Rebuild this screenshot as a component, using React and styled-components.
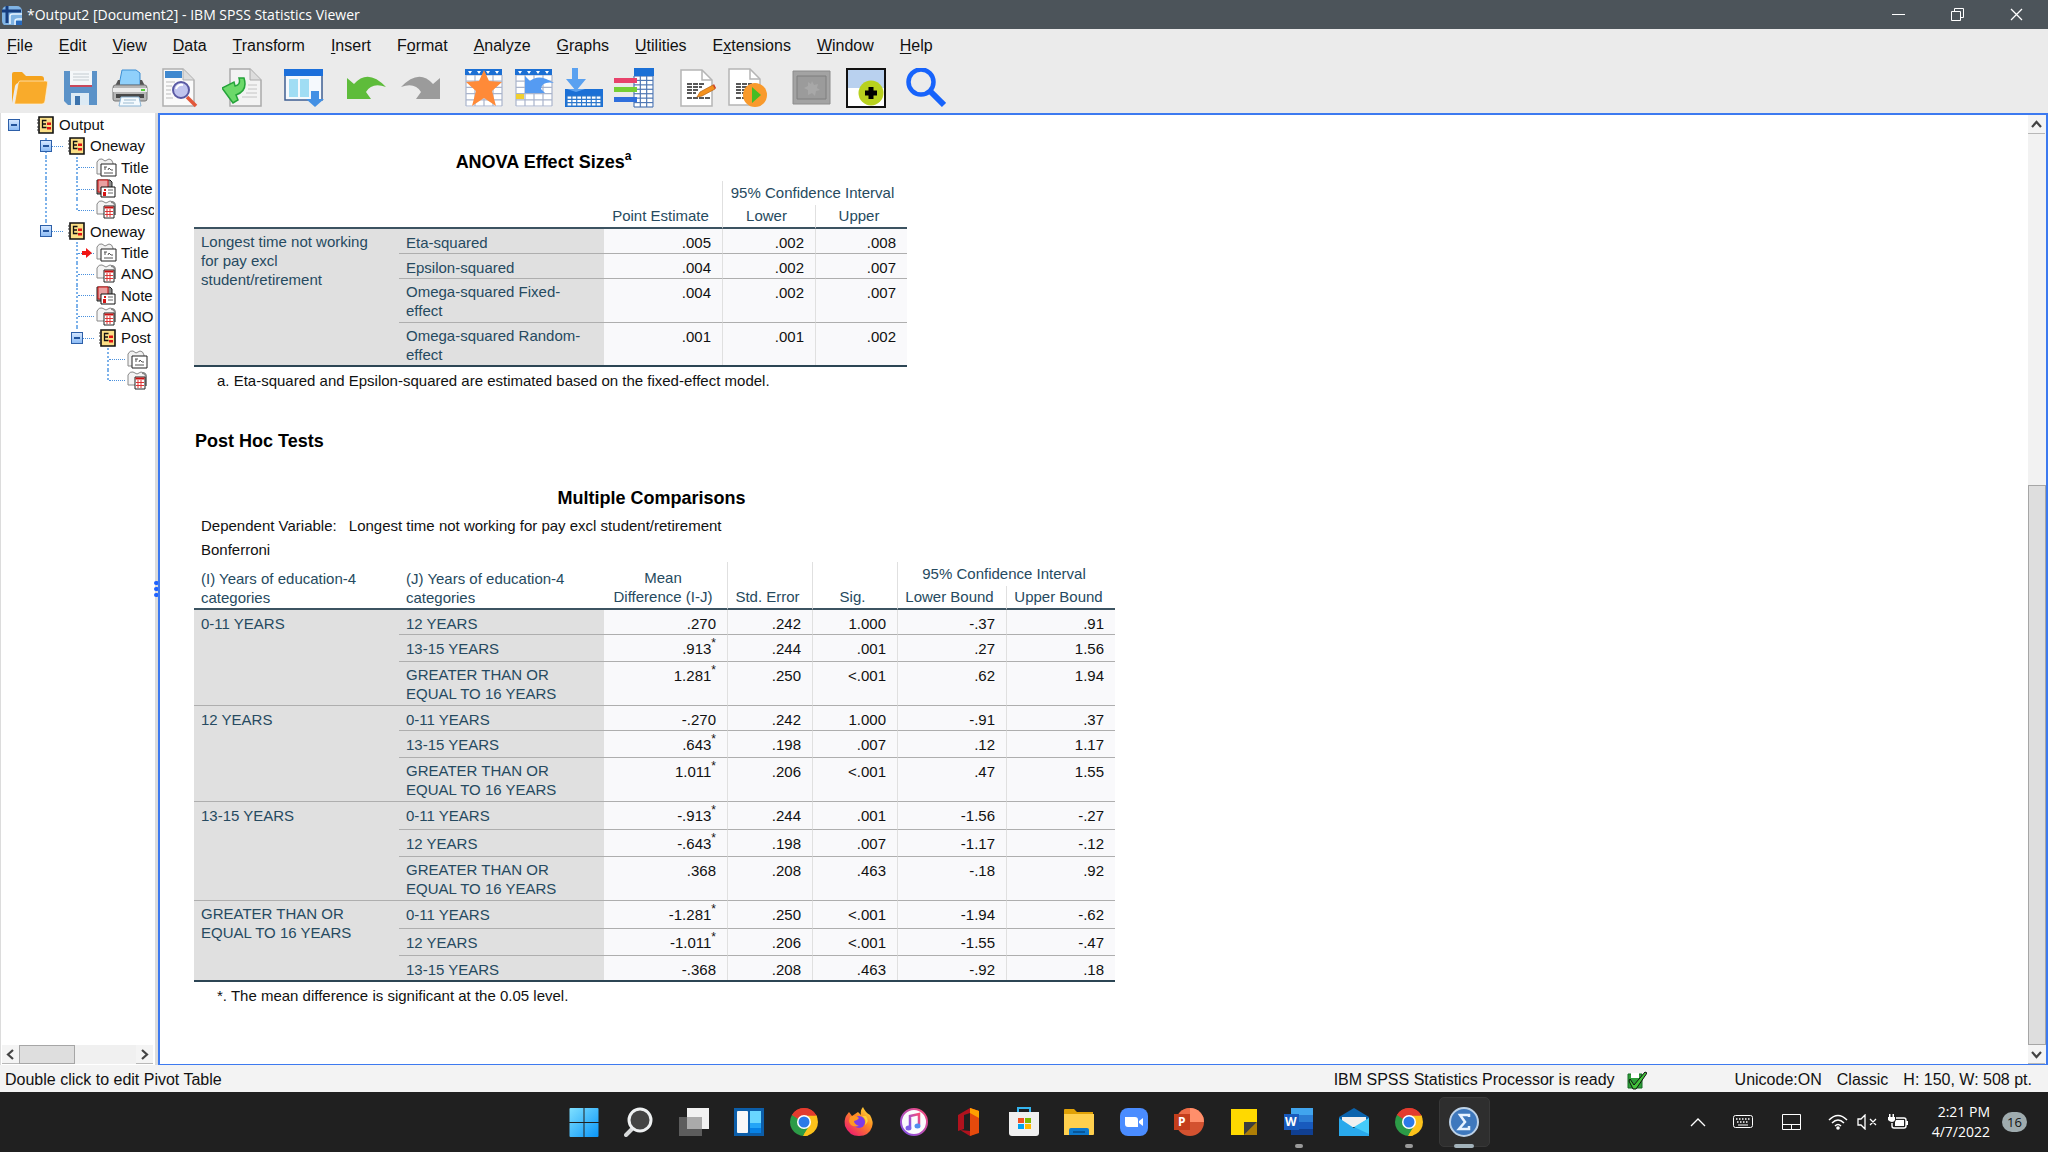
import React from "react";
import styled, { createGlobalStyle, css } from "styled-components";

const Global = createGlobalStyle`
  * { box-sizing: border-box; }
  body { margin: 0; font-family: "Liberation Sans", Arial, sans-serif; font-size: 16px; color: #111; }
  button { border: 0; padding: 0; margin: 0; background: none; font: inherit; color: inherit; }
`;

const Shell = styled.div`
  display: flex;
  flex-direction: column;
  height: 100vh;
  min-width: 1200px;
  overflow: hidden;
  background: #ebebeb;
`;

/* ---------- title bar ---------- */
const TitleBar = styled.header`
  display: flex;
  align-items: center;
  height: 29px;
  flex: none;
  padding: 0 2px;
  gap: 5px;
  background: #4c545a;
  color: #fff;
`;
const TitleText = styled.h1`
  margin: 0;
  flex: 1;
  font: 400 14px/20px "Open Sans", "Noto Sans", sans-serif;
`;
const WindowButtons = styled.div`
  display: flex;
`;
const WindowButton = styled.button`
  width: 59px;
  height: 29px;
  display: grid;
  place-items: center;
`;

/* ---------- menu and toolbar ---------- */
const MenuBar = styled.nav`
  display: flex;
  flex: none;
  gap: 26px;
  height: 33px;
  padding: 1px 7px 0;
  align-items: center;
`;
const MenuButton = styled.button`
  line-height: 20px;
  u { text-underline-offset: 2px; }
`;
const Toolbar = styled.div`
  display: flex;
  flex: none;
  height: 51px;
  padding: 6px 10px 5px;
`;
const ToolGroup = styled.div`
  display: flex;
  gap: ${(p) => p.$gap}px;
  margin-right: ${(p) => p.$after}px;
`;
const ToolButton = styled.button`
  width: 40px;
  height: 40px;
  svg { display: block; }
`;

/* ---------- work area ---------- */
const Work = styled.div`
  display: flex;
  flex: 1;
  min-height: 0;
`;
const Outline = styled.aside`
  width: 155px;
  flex: none;
  display: flex;
  flex-direction: column;
  background: #fff;
  border-left: 1px solid #dcdcdc;
  padding-right: 1px;
`;
const Tree = styled.ul`
  list-style: none;
  margin: 0;
  padding: 1px 0 0;
  height: 278px;
  display: flex;
  flex-direction: column;
  overflow: hidden;
  font-size: 15px;
`;
const TreeRow = styled.li`
  flex: 1;
  display: flex;
  align-items: center;
  white-space: nowrap;
`;
const Guide = styled.span`
  position: relative;
  flex: none;
  align-self: stretch;
  display: grid;
  place-items: center;
  width: ${(p) => (p.$first ? 29 : 31)}px;
  padding-right: ${(p) => (p.$first ? 3 : 0)}px;
  &::before {
    content: "";
    position: absolute;
    left: 15px;
    top: ${(p) => (p.$start ? "3px" : "0")};
    bottom: ${(p) => (p.$v === "half" ? "50%" : "0")};
    border-left: ${(p) => (p.$v ? "2px dotted #7db2ea" : "0")};
  }
  &::after {
    content: "";
    position: absolute;
    left: 17px;
    right: -2px;
    top: 50%;
    border-top: ${(p) => (p.$h ? "1px dotted #4a90dd" : "0")};
  }
`;
const Expander = styled.button`
  position: relative;
  z-index: 1;
  width: 12px;
  height: 12px;
  background: linear-gradient(#d3e6ff, #8dbcf5);
  border: 1px solid #2d5fa8;
  display: grid;
  place-items: center;
  &::after { content: ""; width: 6px; height: 2px; background: #23549c; }
`;
const Current = styled.svg`
  position: absolute;
  z-index: 1;
  right: 0;
  top: 6px;
`;
const NodeIcon = styled.span`
  flex: none;
  width: 29px;
  padding-left: ${(p) => (p.$book ? 6 : 4)}px;
  svg { display: block; }
`;
const HScroll = styled.div`
  margin-top: auto;
  margin-left: 1px;
  margin-right: 1px;
  height: 19px;
  display: flex;
  background: #f0f0f0;
  margin-bottom: 1px;
`;
const ScrollButton = styled.button`
  width: 17px;
  height: 19px;
  flex: none;
  display: grid;
  place-items: center;
  background: #f4f4f4;
  border-bottom: 1px solid #b8b8b8;
`;
const HThumb = styled.div`
  width: 56px;
  background: #dedede;
  border: 1px solid #a6a6a6;
  margin-right: auto;
`;
const Splitter = styled.div`
  width: 3px;
  flex: none;
  background: #dcdcdc;
  display: flex;
  flex-direction: column;
  align-items: center;
  justify-content: center;
  gap: 2px;
`;
const Grip = styled.i`
  width: 5px;
  height: 4px;
  flex: none;
  border-radius: 2px;
  background: #1f62ff;
`;
const Viewer = styled.main`
  flex: 1;
  min-width: 0;
  display: flex;
  background: #fff;
  border: 2px solid #3d7af0;
  border-bottom-width: 1px;
`;
const Document = styled.article`
  flex: 1;
  min-width: 0;
  overflow: hidden;
  padding: 35px 34px 0;
`;
const VScroll = styled.div`
  width: 18px;
  flex: none;
  display: flex;
  flex-direction: column;
  background: #f2f2f2;
`;
const VThumb = styled.div`
  margin-top: auto;
  height: 59%;
  background: #dedede;
  border: 1px solid #a6a6a6;
`;

/* ---------- pivot tables ---------- */
const Heading = styled.h2`
  margin: 0;
  padding: 37px 0 0 1px;
  font: 700 18px/24px "Liberation Sans", Arial, sans-serif;
  color: #000;
`;
const Caption = styled.caption`
  font: 700 18px/24px "Liberation Sans", Arial, sans-serif;
  color: #000;
  padding-bottom: ${(p) => p.$after}px;
  padding-right: ${(p) => p.$shift}px;
  sup { font-size: 12px; line-height: 0; vertical-align: 8px; }
`;
const Layer = styled.span`
  display: block;
  text-align: left;
  padding-left: 7px;
  font: 400 15px/24px "Liberation Sans", Arial, sans-serif;
  color: #111;
  &:first-of-type { margin-top: 4px; }
  b { font-weight: 400; margin-left: 8px; }
`;
const Pivot = styled.table`
  width: ${(p) => p.$width}px;
  margin-top: ${(p) => p.$before || 0}px;
  table-layout: fixed;
  border-collapse: separate;
  border-spacing: 0;
  font-size: 15px;
  line-height: 19px;
  border-bottom: 2px solid #2c4554;
`;
const Head = styled.th`
  padding: ${(p) => (p.$text ? "0 7px 1px" : p.$span ? "0 8px 3px 3px" : "0 8px 2px 3px")};
  font-weight: 400;
  color: #264a60;
  text-align: ${(p) => (p.$text ? "left" : "center")};
  vertical-align: bottom;
  border-left: ${(p) => (p.$rule ? "1px solid #e0e0e0" : "0")};
  border-bottom: ${(p) => (p.$span ? "0" : "2px solid #3c5361")};
  height: 24px;
  white-space: ${(p) => (p.$text ? "normal" : "nowrap")};
`;
const cell = css`
  vertical-align: top;
  font-weight: 400;
  border-top: ${(p) => (p.$top ? "0" : "1px solid #aeaeae")};
`;
const Label = styled.th`
  ${cell}
  padding: ${(p) => (p.$tall ? "3px" : "4px")} 20px 0 7px;
  text-align: left;
  color: #264a60;
  background: #e0e0e0;
`;
const Value = styled.td`
  ${cell}
  padding: 4px 11px 0 0;
  text-align: right;
  background: #f9f9fb;
  border-left: ${(p) => (p.$rule ? "1px solid #e0e0e0" : "0")};
  sup { font-size: 12px; line-height: 0; vertical-align: 7px; }
`;
const BodyRow = styled.tr`
  height: ${(p) => p.$h}px;
`;
const Footnote = styled.p`
  margin: 0;
  padding: 3px 0 0 23px;
  font-size: 15px;
  line-height: 22px;
`;

/* ---------- status bar ---------- */
const StatusBar = styled.footer`
  height: 27px;
  flex: none;
  display: flex;
  align-items: center;
  padding: 2px 16px 0 5px;
  background: #f3f3f3;
  line-height: 20px;
`;
const Processor = styled.span`
  display: flex;
  gap: 12px;
  margin-left: auto;
  margin-right: 88px;
`;
const StatusItem = styled.span`
  & + & { margin-left: 15px; }
`;

/* ---------- taskbar ---------- */
const Taskbar = styled.div`
  height: 60px;
  flex: none;
  display: grid;
  grid-template-columns: 1fr auto 1fr;
  align-items: center;
  background: #202020;
  color: #fff;
`;
const Apps = styled.div`
  grid-column: 2;
  display: flex;
`;
const AppButton = styled.button`
  position: relative;
  width: 55px;
  height: 60px;
  display: grid;
  place-items: center;
  svg { position: relative; }
  &::before {
    content: "";
    position: absolute;
    inset: 5px 2px;
    border-radius: 5px;
    background: ${(p) => (p.$state === "active" ? "#2e2e2e" : "none")};
    border: ${(p) => (p.$state === "active" ? "1px solid #383838" : "0")};
  }
  &::after {
    content: "";
    position: absolute;
    bottom: 4px;
    height: ${(p) => (p.$state ? 4 : 0)}px;
    width: ${(p) => (p.$state === "active" ? 20 : 8)}px;
    border-radius: 2px;
    background: ${(p) => (p.$state === "active" ? "#a3b3bb" : "#9a9a9a")};
  }
`;
const Tray = styled.div`
  display: flex;
  align-items: center;
  justify-content: flex-end;
  padding-right: 21px;
`;
const TrayButton = styled.button`
  width: 24px;
  height: 40px;
  display: grid;
  place-items: center;
  margin-right: ${(p) => p.$after}px;
`;
const Clock = styled.time`
  font: 400 14px/20px "Open Sans", "Noto Sans", sans-serif;
  text-align: right;
  margin-right: 12px;
  span { display: block; }
`;
const Badge = styled.span`
  width: 25px;
  height: 20px;
  display: grid;
  place-items: center;
  border-radius: 10px;
  background: #9fabae;
  color: #111;
  font: 400 13px/20px "Open Sans", sans-serif;
`;

/* ---------- drawings ---------- */
const Svg = ({ s = 40, w, h, vb, children }) => (
  <svg width={w || s} height={h || s} viewBox={vb || `0 0 ${w || s} ${h || s}`} fill="none" aria-hidden="true">
    {children}
  </svg>
);

const gridLines = (x, y, w, h, nx, ny, color, sw = 1.2) => (
  <g stroke={color} strokeWidth={sw}>
    {Array.from({ length: nx + 1 }, (_, i) => <path key={"v" + i} d={`M${x + (w * i) / nx} ${y}v${h}`} />)}
    {Array.from({ length: ny + 1 }, (_, i) => <path key={"h" + i} d={`M${x} ${y + (h * i) / ny}h${w}`} />)}
  </g>
);
const DataGrid = () => (
  <>
    <path d="M2 1h36v38h-36z" fill="#fff" />
    {gridLines(2, 7, 36, 31, 4, 5, "#a9b4cb")}
    <path d="M1 1h37v6h-37z" fill="#1b6fd4" />
    <path d="M4 3h4l-2 3zM13 3h4l-2 3zM22 3h4l-2 3zM31 3h4l-2 3z" fill="#fff" />
  </>
);

const tools = {
  Open: (
    <Svg>
      <path d="M2 35V6q0-2 2-2h8l4 4h15q3 0 3 3v4H9q-3 0-4 3z" fill="#f5a31d" />
      <path d="M10 13h26q2 0 1.600 2L35 33q-.5 3-3 3H4.500L8 16q.5-3 2-3z" fill="#f9ab2b" stroke="#fff1d6" strokeWidth=".7" />
    </Svg>
  ),
  Save: (
    <Svg>
      <path d="M4 3h33v34H8l-4-4z" fill="#5b92c8" />
      <path d="M10 3h22v16H10z" fill="#f4f7f9" /><path d="M10 17h22v2H10z" fill="#c8475b" />
      <path d="M13 6h16M13 9h16M13 12h16" stroke="#c3cbd0" />
      <path d="M11 25h18v12H11z" fill="#dceaf4" /><path d="M15 28h5v9h-5z" fill="#3c73ad" />
    </Svg>
  ),
  Print: (
    <Svg>
      <path d="M12 2h14l4 3v12H9z" fill="#8fd0fb" stroke="#3d8fd4" />
      <path d="M8 12h2v6h20v-6h2l3 6H5z" fill="#555" />
      <path d="M5 17h30q2 0 2 3v11q0 2-2 2H5q-2 0-2-2V20q0-3 2-3z" fill="#b6b6b6" stroke="#777" />
      <path d="M3 20h34v4H3z" fill="#ececec" /><path d="M6 26h28v4H6z" fill="#484848" />
      <path d="M31 21h4v2h-4z" fill="#54cf3a" />
      <path d="M11 29h18l2 9H9z" fill="#f4fafe" stroke="#8bb4d4" /><path d="M14 32h12M13 35h11" stroke="#9bbad0" />
    </Svg>
  ),
  Preview: (
    <Svg>
      <path d="M3 1h20l11 11v26H3z" fill="#fafafa" stroke="#b0b0b0" strokeWidth="1.500" /><path d="M23 1v11h11" fill="#ddd" stroke="#b0b0b0" />
      <path d="M5 3h17v7H5z" fill="#3f88cf" />
      <path d="M6 14h9M6 18h6M6 22h5M6 26h5M6 30h7" stroke="#bbb" />
      <path d="M27 29l9 9" stroke="#e2573a" strokeWidth="3.500" />
      <circle cx="21" cy="22" r="8" fill="#c0c4ee" stroke="#5959a3" strokeWidth="2" />
      <path d="M16 21q2-5 7-4" stroke="#fff" strokeWidth="2" />
    </Svg>
  ),
  Export: (
    <Svg>
      <path d="M8 1h20l11 11v26H8z" fill="#f3f3f3" stroke="#aaa" strokeWidth="1.500" /><path d="M28 1v11h11" fill="#ddd" stroke="#aaa" />
      <path d="M26 17h9M26 21h9M24 25h11M20 29h15" stroke="#c4c4c4" />
      <path d="M0 20l12-6 1 4q6-1 4-8l5 0q4 13-8 17l2 5-5 3z" fill="#6cd96a" stroke="#25a33a" strokeWidth="1.500" />
    </Svg>
  ),
  Recall: (
    <Svg>
      <path d="M1 2h37v30H1z" fill="#f5f9fd" stroke="#3f5f92" strokeWidth="1.500" /><path d="M0 1h39v7H0z" fill="#1b6fdb" />
      <path d="M5 11h9v18H5zM16 11h9v18h-9z" fill="#a0ddf4" />
      <path d="M27 23h8v8h5l-9 8-9-8h5z" fill="#4390e4" />
    </Svg>
  ),
  Undo: <Svg><path d="M1 10l7 6Q22 0 40 19q-14-5-20 5l5 7H1z" fill="#5ebc3b" /></Svg>,
  Redo: <Svg><path d="M40 10l-7 6Q19 0 1 19q14-5 20 5l-5 7h24z" fill="#9b9b9b" /></Svg>,
  "Go to data": <Svg><DataGrid /><path d="M20 2l5 11 13 1-10 9 4 15-12-8-12 8 4-15-10-9 13-1z" fill="#ff8a38" /></Svg>,
  "Go to case": (
    <Svg><DataGrid /><path d="M2 26h8v5H2z" fill="#f0cf2f" /><path d="M11 8l5 5q9-8 24 2-12-2-13 6l4 4H11z" fill="#559bf2" /></Svg>
  ),
  "Select cases": (
    <Svg>
      <path d="M8 0h6v11h8l-10 12L2 11h6z" fill="#5aa1f0" />
      <path d="M1 21h38v18H1z" fill="#1b70d6" />
      <path d="M3 28h34v10H3z" fill="#fff" />{gridLines(3, 28, 34, 10, 7, 3, "#2d78cc")}
      <path d="M3 21h18l-9 3z" fill="#5aa1f0" />
    </Svg>
  ),
  Variables: (
    <Svg>
      <path d="M20 0h20v39H20z" fill="#fff" />{gridLines(20, 8, 19, 31, 3, 7, "#5078b4")}
      <path d="M20 0h20v8H20z" fill="#1b70d6" />
      <path d="M0 10h23v5H0z" fill="#e8426b" /><path d="M0 19h23v5H0z" fill="#75cf35" /><path d="M0 29h23v5H0z" fill="#2f6fdc" />
    </Svg>
  ),
  "Edit script": (
    <Svg>
      <path d="M3 2h21l10 10v26H3z" fill="#fff" stroke="#b5b5b5" strokeWidth="1.500" /><path d="M24 2v10h10" stroke="#b5b5b5" strokeWidth="1.500" />
      <path d="M9 16h17M9 19h15M9 22h11M9 25h9M9 30h24" stroke="#222" strokeWidth="1.600" strokeDasharray="5 1" />
      <path d="M19 29l3-5 13-7 2 4-13 7z" fill="#f5921e" stroke="#b8620c" strokeWidth=".7" /><path d="M35 17l2 4 1-1-2-4z" fill="#ce3b20" />
    </Svg>
  ),
  "Run script": (
    <Svg>
      <path d="M1 1h21l10 10v26H1z" fill="#fff" stroke="#b5b5b5" strokeWidth="1.500" /><path d="M22 1v10h10" stroke="#b5b5b5" strokeWidth="1.500" />
      <path d="M8 16h16M8 19h12M8 22h10M8 25h9M8 30h9" stroke="#222" strokeWidth="1.600" strokeDasharray="5 1" />
      <circle cx="27" cy="27" r="12" fill="#f99a2c" /><path d="M24 19l9 8-9 8z" fill="#45bd24" />
    </Svg>
  ),
  Designate: (
    <Svg>
      <path d="M1 3h37v33H1z" fill="#a3a3a3" stroke="#8c8c8c" /><path d="M5 8h29v23H5z" fill="#9b9b9b" stroke="#7f7f7f" />
      <path d="M20 13l2 4 4-1-1 4 3 2-4 1-1 5-3-3-4 2v-5l-4-2 4-2v-4l3 2z" fill="#a8a8a8" />
    </Svg>
  ),
  "Insert object": (
    <Svg>
      <path d="M1 1h38v38H1z" fill="#fff" stroke="#111" strokeWidth="2" /><path d="M2 2h36v18H2z" fill="#b9d1ef" />
      <circle cx="25" cy="25" r="12.500" fill="#b8d11e" /><path d="M25 19v12M19 25h12" stroke="#000" strokeWidth="5" />
    </Svg>
  ),
  Search: <Svg><circle cx="15" cy="14" r="12.500" stroke="#1763fb" strokeWidth="4.500" /><path d="M24 23l14 14" stroke="#1763fb" strokeWidth="6" /></Svg>,
};

const nodeIcons = {
  book: (
    <Svg s={18}>
      <path d="M3 1h14v16H3z" fill="#fbdf86" stroke="#111" strokeWidth="1.600" /><path d="M1 4h3M1 7h3M1 11h3M1 14h3" stroke="#333" strokeWidth="1.200" />
      <path d="M10.500 4.500H6.500v7h4M7 8h3" stroke="#111" strokeWidth="1.300" /><path d="M11 6.500h4v2.500h-4zM11 11h4v2.500h-4z" fill="#e01212" />
    </Svg>
  ),
  title: (
    <Svg w={21} h={19}>
      <path d="M1 16V4q2-4 5-3l3 2 4-2q3 0 4 4v11z" fill="#f2f2f2" stroke="#888" /><path d="M5 6h15v12H5z" fill="#fff" stroke="#222" />
      <path d="M8 9h3M9 9v3M12 12l1-2 2 2h2M8 15h9" stroke="#555" />
    </Svg>
  ),
  notes: (
    <Svg w={21} h={19}>
      <path d="M1 15V1h13l2 2v12z" fill="#8c8c8c" stroke="#222" /><path d="M2 1h10v12H2z" fill="#e8a0a0" stroke="#c11" />
      <path d="M5 8h14v10H5z" fill="#fff" stroke="#111" /><path d="M8 10h2v2H8zM7 13h3v4H7z" fill="#d41414" /><path d="M12 11h5M12 14h5" stroke="#666" />
    </Svg>
  ),
  table: (
    <Svg w={21} h={19}>
      <path d="M1 14V4q2-4 5-3l4 2 4-2q4 0 5 4v9z" fill="#f4f4f4" stroke="#888" /><path d="M15 2q4 0 4 4v9" stroke="#888" strokeWidth="2" />
      <path d="M8 6h10v12H8z" fill="#fff" stroke="#222" /><path d="M8.500 6.500h9v2h-9z" fill="#c11" />
      <path d="M11 9v8M14 9v8M9 11.500h8M9 14.500h8" stroke="#d33" />
    </Svg>
  ),
};

const chrome = (
  <Svg s={28}>
    <path d="M14 14L1.900 7A14 14 0 0 1 26.100 7z" fill="#e33b2e" /><path d="M14 14L26.100 7A14 14 0 0 1 14 28z" fill="#fcc21b" />
    <path d="M14 14L14 28A14 14 0 0 1 1.900 7z" fill="#2c9b47" />
    <path d="M14 7.500h12.400L27 9l-7.600 8.500z" fill="#fcc21b" /><path d="M8.400 17.300L1.900 7 14 7.500z" fill="#2c9b47" />
    <path d="M2 7A14 14 0 0 1 26.400 7.500H14L8 11z" fill="#e33b2e" /><path d="M19.600 17.300L13 28l-5-8z" fill="#2c9b47" /><path d="M20 17l-7 11q3 .3 5-.5l7-9z" fill="#fcc21b" />
    <circle cx="14" cy="14" r="7" fill="#fff" /><circle cx="14" cy="14" r="5.500" fill="#2c7ae8" />
  </Svg>
);

const apps = [
  ["Start", <Svg s={30}><defs><linearGradient id="win" x1="0" y1="0" x2="1" y2="1"><stop stopColor="#7fe0ff" /><stop offset="1" stopColor="#0a95f8" /></linearGradient></defs>
    <path d="M.5 2q0-1 1-1h13v14H.5zM15.500 1h13q1 0 1 1v13h-14zM.5 16h14v14h-13q-1 0-1-1zM15.500 16h14v13q0 1-1 1h-13z" fill="url(#win)" /></Svg>],
  ["Search", <Svg s={30}><path d="M9 21l-7 7" stroke="#d7d9da" strokeWidth="4" strokeLinecap="round" /><circle cx="16" cy="13" r="11" fill="#444" stroke="#eef0f1" strokeWidth="3" /></Svg>],
  ["Task view", <Svg s={30}><path d="M0 10h23v19H0z" fill="#5c5c5c" /><path d="M8 1h22v21H8z" fill="#f1f1f1" /><path d="M8 10h15v12H8z" fill="#aaa" /></Svg>],
  ["Widgets", <Svg s={30}><path d="M0 1h30v28H0z" fill="#0c5ea9" /><rect x="3" y="4" width="11" height="22" rx="1" fill="#f8f8f8" /><path d="M16 4h11v12H16z" fill="#69d6ff" /><path d="M16 16h11v5H16z" fill="#24a5f7" /><path d="M16 21h11v5H16z" fill="#0782e6" /></Svg>],
  ["Chrome", chrome],
  ["Firefox", <Svg s={30}><defs><linearGradient id="fx" x1="1" y1="0" x2=".2" y2="1"><stop stopColor="#ffef45" /><stop offset=".45" stopColor="#ff8b20" /><stop offset="1" stopColor="#ec1672" /></linearGradient></defs>
    <path d="M2 9l3-4 3 4 6-4 3 3q-1-5 2-8 2 5 7 8 4 7 2 12-3 9-13 9T1 19Q0 13 2 9z" fill="url(#fx)" /><circle cx="15" cy="15" r="6" fill="#7d3be8" /><path d="M6 10q5-3 9 1-2 3-5 3 0 3 5 5-9 2-10-5z" fill="#ff9823" /><path d="M18 9q5 3 3 9 5-4 1-9z" fill="#ffd13a" /></Svg>],
  ["iTunes", <Svg s={30}><defs><linearGradient id="it" x1="1" y1="0" x2="0" y2="1"><stop stopColor="#fa4a75" /><stop offset="1" stopColor="#7f52ee" /></linearGradient></defs><circle cx="15" cy="15" r="13" fill="#fbfbfd" stroke="url(#it)" strokeWidth="2" />
    <path d="M11 20V9l9-2v11" stroke="url(#it)" strokeWidth="2.500" /><ellipse cx="9.500" cy="21" rx="3" ry="2.500" fill="#7d62e8" /><ellipse cx="18.500" cy="19" rx="3" ry="2.500" fill="#4e8df0" /></Svg>],
  ["Office", <Svg s={30}><path d="M16 1l9 3v21l-9 4-10-6 10 1V6l-6 2v14l-6 2V8z" fill="#b0121d" /><path d="M16 1l9 3v22l-9 3z" fill="#e54a0c" /><path d="M16 1l9 3v7l-9-5z" fill="#ffa000" /></Svg>],
  ["Store", <Svg s={30}><path d="M9 6V1h12v5" stroke="#35b5f0" strokeWidth="2" /><path d="M0 5h30v21q0 3-3 3H3q-3 0-3-3z" fill="#f0f0f0" /><path d="M9 11h6v5H9z" fill="#f25022" /><path d="M16 11h6v5h-6z" fill="#7fba00" /><path d="M9 17h6v5H9z" fill="#00a4ef" /><path d="M16 17h6v5h-6z" fill="#ffb900" /></Svg>],
  ["File Explorer", <Svg s={30}><path d="M0 3q0-1 1-1h9l3 3h16v4H0z" fill="#e0a106" /><path d="M0 7h30v20q0 1-1 1H0z" fill="#ffd04e" /><path d="M5 28v-5q0-2 2-2h16q2 0 2 2v5z" fill="#0e79cd" /><path d="M9 25h12" stroke="#064a86" strokeWidth="1.500" /></Svg>],
  ["Zoom", <Svg s={30}><rect x="1" y="1" width="28" height="28" rx="8" fill="#4a8cff" /><path d="M6 10h10q3 0 3 3v7H9q-3 0-3-3zM20 14l4-3v8l-4-3z" fill="#fff" /></Svg>],
  ["PowerPoint", <Svg s={30}><circle cx="16" cy="15" r="14" fill="#d35230" /><path d="M16 1a14 14 0 0 1 14 14H16z" fill="#ff8f6b" /><path d="M16 1A14 14 0 0 0 2 15h14z" fill="#ed6c47" /><path d="M0 7h16v16H0z" fill="#c43e1c" /><text x="4" y="19" fill="#fff" fontFamily="Open Sans" fontWeight="700" fontSize="12">P</text></Svg>],
  ["Sticky Notes", <Svg s={30}><path d="M2 2h26v13L15 28H2z" fill="#ffd900" /><path d="M15 15h13L15 28z" fill="#3d3d3d" /><path d="M28 15v13H15z" fill="#ae7e06" /></Svg>],
  ["Word", <Svg s={30}><path d="M7 1h22v7H7z" fill="#41a5ee" /><path d="M7 8h22v7H7z" fill="#2b7cd3" /><path d="M7 15h22v7H7z" fill="#185abd" /><path d="M7 22h22v6H7z" fill="#103f91" /><path d="M0 7h15v16H0z" fill="#185abd" /><text x="1" y="19" fill="#fff" fontFamily="Open Sans" fontWeight="700" fontSize="12">W</text></Svg>, "open"],
  ["Mail", <Svg s={30}><path d="M0 10L15 1l15 9v3H0z" fill="#0a63ad" /><path d="M3 10h24v10H3z" fill="#f0f0f0" /><path d="M0 11l15 10L30 11v18H0z" fill="#29a9ec" /><path d="M15 20l15-9v16z" fill="#45cbfa" /></Svg>],
  ["Chrome", chrome, "open"],
  ["SPSS Statistics", <Svg s={30}><circle cx="15" cy="15" r="14" fill="#3e78bd" stroke="#bdd2e8" strokeWidth="2" /><path d="M20 10V8h-9l5 7-6 7h10v-3" stroke="#e8f3ff" strokeWidth="2.500" /></Svg>, "active"],
];

/* ---------- data ---------- */
const menus = [["", "F", "ile"], ["", "E", "dit"], ["", "V", "iew"], ["", "D", "ata"], ["", "T", "ransform"], ["", "I", "nsert"], ["F", "o", "rmat"], ["", "A", "nalyze"], ["", "G", "raphs"], ["", "U", "tilities"], ["E", "x", "tensions"], ["", "W", "indow"], ["", "H", "elp"]];

// Names, the gap inside the group, and the space after it.
const toolGroups = [
  [["Open", "Save", "Print", "Preview"], 10, 22],
  [["Export"], 10, 22],
  [["Recall"], 10, 22],
  [["Undo", "Redo"], 14, 24],
  [["Go to data", "Go to case", "Select cases", "Variables"], 10, 24],
  [["Edit script", "Run script"], 10, 24],
  [["Designate", "Insert object"], 14, 20],
  [["Search"], 10, 0],
];

// Each guide is [vertical, horizontal, has expander, starts a branch].
const none = [], full = ["full"], tee = ["full", true], end = ["half", true];
const tree = [
  ["Output", "book", [["", false, true]]],
  ["Oneway", "book", [none, ["full", true, true, true]]],
  ["Title", "title", [none, full, ["full", true]]],
  ["Note", "notes", [none, full, tee]],
  ["Desc", "table", [none, full, end]],
  ["Oneway", "book", [none, ["half", true, true]]],
  ["Title", "title", [none, none, tee], true],
  ["ANO", "table", [none, none, tee]],
  ["Note", "notes", [none, none, tee]],
  ["ANO", "table", [none, none, tee]],
  ["Post", "book", [none, none, ["half", true, true]]],
  ["", "title", [none, none, none, ["full", true]]],
  ["", "table", [none, none, none, end]],
];

const effects = [
  ["Eta-squared", [".005", ".002", ".008"], 24],
  ["Epsilon-squared", [".004", ".002", ".007"], 25],
  ["Omega-squared Fixed-effect", [".004", ".002", ".007"], 44],
  ["Omega-squared Random-effect", [".001", ".001", ".002"], 43],
];
const G = "GREATER THAN OR EQUAL TO 16 YEARS";
const comparisons = [
  ["0-11 YEARS", [
    ["12 YEARS", [".270", ".242", "1.000", "-.37", ".91"], 24],
    ["13-15 YEARS", [".913*", ".244", ".001", ".27", "1.56"], 27],
    [G, ["1.281*", ".250", "<.001", ".62", "1.94"], 44]]],
  ["12 YEARS", [
    ["0-11 YEARS", ["-.270", ".242", "1.000", "-.91", ".37"], 25],
    ["13-15 YEARS", [".643*", ".198", ".007", ".12", "1.17"], 27],
    [G, ["1.011*", ".206", "<.001", ".47", "1.55"], 44]]],
  ["13-15 YEARS", [
    ["0-11 YEARS", ["-.913*", ".244", ".001", "-1.56", "-.27"], 28],
    ["12 YEARS", ["-.643*", ".198", ".007", "-1.17", "-.12"], 27],
    [G, [".368", ".208", ".463", "-.18", ".92"], 44]]],
  [G, [
    ["0-11 YEARS", ["-1.281*", ".250", "<.001", "-1.94", "-.62"], 28],
    ["12 YEARS", ["-1.011*", ".206", "<.001", "-1.55", "-.47"], 27],
    ["13-15 YEARS", ["-.368", ".208", ".463", "-.92", ".18"], 25]]],
];

const Cols = ({ widths }) => <colgroup>{widths.map((w, i) => <col key={i} width={w} />)}</colgroup>;
const Chevron = ({ d }) => <Svg s={11}><path d={d} stroke="#444" strokeWidth="2.200" /></Svg>;

function EffectSizes() {
  return (
    <Pivot $width={713}>
      <Caption $after={7} $shift={14}>ANOVA Effect Sizes<sup>a</sup></Caption>
      <Cols widths={[205, 205, 118, 93, 92]} />
      <thead>
        <tr>
          <Head $text rowSpan={2} colSpan={2} />
          <Head rowSpan={2}>Point Estimate</Head>
          <Head $rule $span colSpan={2}>95% Confidence Interval</Head>
        </tr>
        <tr><Head $rule>Lower</Head><Head $rule>Upper</Head></tr>
      </thead>
      <tbody>
        {effects.map(([name, values, h], i) => (
          <BodyRow key={name} $h={h}>
            {i === 0 && <Label $top $tall rowSpan={4} scope="rowgroup">Longest time not working for pay excl student/retirement</Label>}
            <Label $top={i === 0} $tall={i > 1} scope="row">{name}</Label>
            {values.map((v, k) => <Value key={k} $top={i === 0} $rule={k > 0}>{v}</Value>)}
          </BodyRow>
        ))}
      </tbody>
    </Pivot>
  );
}

function Comparisons() {
  return (
    <Pivot $width={921} $before={33}>
      <Caption $after={0} $shift={6}>
        Multiple Comparisons
        <Layer>Dependent Variable: <b>Longest time not working for pay excl student/retirement</b></Layer>
        <Layer>Bonferroni</Layer>
      </Caption>
      <Cols widths={[205, 205, 123, 85, 85, 109, 109]} />
      <thead>
        <tr>
          <Head $text rowSpan={2}>(I) Years of education-4 categories</Head>
          <Head $text rowSpan={2}>(J) Years of education-4 categories</Head>
          <Head rowSpan={2}>Mean<br />Difference (I-J)</Head>
          <Head $rule rowSpan={2}>Std. Error</Head>
          <Head $rule rowSpan={2}>Sig.</Head>
          <Head $rule $span colSpan={2}>95% Confidence Interval</Head>
        </tr>
        <tr><Head $rule>Lower Bound</Head><Head $rule>Upper Bound</Head></tr>
      </thead>
      <tbody>
        {comparisons.map(([group, rows], g) => rows.map(([name, values, h], i) => {
          const top = g === 0 && i === 0;
          return (
            <BodyRow key={group + name} $h={h}>
              {i === 0 && <Label $top={top} $tall={group === G} rowSpan={3} scope="rowgroup">{group}</Label>}
              <Label $top={top} $tall={name === G} scope="row">{name}</Label>
              {values.map((v, k) => (
                <Value key={k} $top={top} $rule={k > 0}>{v.replace("*", "")}{v.endsWith("*") && <sup>*</sup>}</Value>
              ))}
            </BodyRow>
          );
        }))}
      </tbody>
    </Pivot>
  );
}

export default function App() {
  return (
    <Shell>
      <Global />
      <TitleBar>
        <Svg s={20}>
          <rect width="20" height="20" rx="5" y="1" fill="#7fb3e3" /><path d="M0 6h19M5 1v17" stroke="#163d7e" strokeWidth="3" />
          <path d="M8 19v-8q0-2 3-2h9M13 20v-4q0-2 3-2h4" stroke="#e9f5ff" strokeWidth="1.500" /><path d="M14 16h6v4h-6z" fill="#2869bb" />
        </Svg>
        <TitleText>*Output2 [Document2] - IBM SPSS Statistics Viewer</TitleText>
        <WindowButtons>
          <WindowButton aria-label="Minimize"><Svg s={13}><path d="M0 6.500h13" stroke="#fff" /></Svg></WindowButton>
          <WindowButton aria-label="Restore"><Svg s={13}><path d="M.5 3.500h9v9h-9zM3.500 3V.5h9v9H10" stroke="#fff" /></Svg></WindowButton>
          <WindowButton aria-label="Close"><Svg s={13}><path d="M1 1l11 11M12 1L1 12" stroke="#fff" strokeWidth="1.300" /></Svg></WindowButton>
        </WindowButtons>
      </TitleBar>
      <MenuBar>
        {menus.map(([a, b, c]) => <MenuButton key={b + c}>{a}<u>{b}</u>{c}</MenuButton>)}
      </MenuBar>
      <Toolbar>
        {toolGroups.map(([names, gap, after]) => (
          <ToolGroup key={names[0]} $gap={gap} $after={after}>
            {names.map((n) => <ToolButton key={n} aria-label={n}>{tools[n]}</ToolButton>)}
          </ToolGroup>
        ))}
      </Toolbar>
      <Work>
        <Outline>
          <Tree>
            {tree.map(([name, icon, guides, current], i) => (
              <TreeRow key={i}>
                {guides.map(([v, h, box, start], k) => (
                  <Guide key={k} $first={k === 0} $v={v} $h={h} $start={start}>
                    {box && <Expander aria-label={"Collapse " + name} />}
                    {current && k === guides.length - 1 && (
                      <Current width="10" height="10" aria-hidden="true"><path d="M0 3h4V0l6 5-6 5V7H0z" fill="#f01515" /></Current>
                    )}
                  </Guide>
                ))}
                <NodeIcon $book={icon === "book"}>{nodeIcons[icon]}</NodeIcon>
                {name}
              </TreeRow>
            ))}
          </Tree>
          <HScroll>
            <ScrollButton aria-label="Scroll left"><Chevron d="M8 1L3 5.500 8 10" /></ScrollButton>
            <HThumb />
            <ScrollButton aria-label="Scroll right"><Chevron d="M3 1l5 4.500L3 10" /></ScrollButton>
          </HScroll>
        </Outline>
        <Splitter><Grip /><Grip /><Grip /></Splitter>
        <Viewer>
          <Document>
            <EffectSizes />
            <Footnote>a. Eta-squared and Epsilon-squared are estimated based on the fixed-effect model.</Footnote>
            <Heading>Post Hoc Tests</Heading>
            <Comparisons />
            <Footnote>*. The mean difference is significant at the 0.05 level.</Footnote>
          </Document>
          <VScroll>
            <ScrollButton aria-label="Scroll up"><Chevron d="M1 8l4.500-5L10 8" /></ScrollButton>
            <VThumb />
            <ScrollButton aria-label="Scroll down"><Chevron d="M1 3l4.500 5L10 3" /></ScrollButton>
          </VScroll>
        </Viewer>
      </Work>
      <StatusBar>
        <span>Double click to edit Pivot Table</span>
        <Processor>
          IBM SPSS Statistics Processor is ready
          <Svg s={20}><path d="M1 4h14v14H1z" fill="#2d9e38" stroke="#176b25" /><path d="M4 3h8v5H4z" fill="#fff" /><path d="M3 9l4 6L18 2l2 1L9 19H6L2 11z" fill="#43c23b" stroke="#111" /></Svg>
        </Processor>
        <StatusItem>Unicode:ON</StatusItem><StatusItem>Classic</StatusItem><StatusItem>H: 150, W: 508 pt.</StatusItem>
      </StatusBar>
      <Taskbar>
        <Apps>
          {apps.map(([name, icon, state], i) => <AppButton key={i} aria-label={name} $state={state}>{icon}</AppButton>)}
        </Apps>
        <Tray>
          <TrayButton $after={21} aria-label="Show hidden icons"><Svg w={16} h={10}><path d="M1 9l7-7 7 7" stroke="#fff" strokeWidth="1.300" /></Svg></TrayButton>
          <TrayButton $after={25} aria-label="Touch keyboard"><Svg w={20} h={14}><rect x=".5" y=".5" width="19" height="12" rx="2" stroke="#fff" /><path d="M3 4h14M4 7h12" stroke="#fff" strokeWidth="1.500" strokeDasharray="1.500 1.500" /><path d="M5 10h10" stroke="#fff" /></Svg></TrayButton>
          <TrayButton $after={22} aria-label="Touchpad"><Svg w={20} h={16}><path d="M.5.5h18v15H.5zM.5 10.500h18M9.500 10.500v5" stroke="#fff" /></Svg></TrayButton>
          <TrayButton $after={5} aria-label="Wi-Fi"><Svg w={20} h={16}><path d="M1 6q9-9 18 0M4 9q6-6 12 0M7 12q3-3 6 0" stroke="#fff" strokeWidth="1.500" /><circle cx="10" cy="14" r="1.800" fill="#fff" /></Svg></TrayButton>
          <TrayButton $after={7} aria-label="Volume muted"><Svg w={20} h={16}><path d="M1 5h3l4-4v14l-4-4H1zM13 5l6 6M19 5l-6 6" stroke="#fff" strokeWidth="1.300" /></Svg></TrayButton>
          <TrayButton $after={22} aria-label="Battery charging"><Svg w={20} h={17}><path d="M8 4h8q2 0 2 2v6q0 2-2 2H6q-2 0-2-2V9" stroke="#fff" strokeWidth="1.400" /><path d="M8 6h8v6H7V8zM18 7h2v4h-2zM0 3h7v3q-1 2-3 2T0 6zM1 0h1.500v3H1zM4.500 0H6v3H4.500z" fill="#fff" /></Svg></TrayButton>
          <Clock><span>2:21 PM</span><span>4/7/2022</span></Clock>
          <Badge>16</Badge>
        </Tray>
      </Taskbar>
    </Shell>
  );
}
